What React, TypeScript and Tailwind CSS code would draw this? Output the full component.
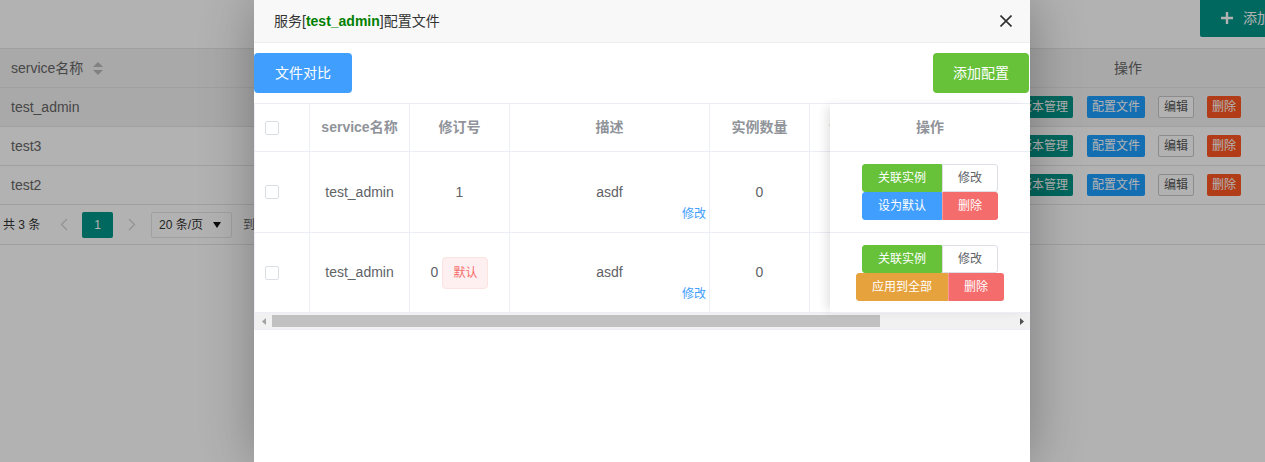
import React from "react";

const bgRows = [
  { name: "test_admin", hover: true },
  { name: "test3", hover: false },
  { name: "test2", hover: false },
];

const SortIcon = () => (
  <svg width="10" height="13" viewBox="0 0 10 13" className="ml-[10px]">
    <path d="M5 0 L10 5 L0 5 Z" fill="#b9b9b9" />
    <path d="M0 8 L10 8 L5 13 Z" fill="#b9b9b9" />
  </svg>
);

const XsBtn = ({ children, className }: { children: React.ReactNode; className: string }) => (
  <span className={`flex h-[22px] items-center rounded-[2px] px-[5px] text-[12px] ${className}`}>{children}</span>
);

const BackgroundPage = () => (
  <div className="w-full">
    <div className="flex h-[48px] justify-end">
      <button className="-mr-[52px] -mt-px flex h-[38px] items-center rounded-[2px] bg-[#009688] pl-[18px] pr-[18px] text-[14px] text-white">
        <svg width="18" height="18" viewBox="0 0 18 18">
          <path d="M9 3 V15 M3 9 H15" stroke="#fff" strokeWidth="2.4" />
        </svg>
        <span className="ml-[7px]">添加服务</span>
      </button>
    </div>
    <div className="border-t border-[#e6e6e6] text-[14px] text-[#666]">
      <div className="flex h-[39px] border-b border-[#e6e6e6] bg-[#f2f2f2]">
        <div className="flex flex-1 items-center pl-[11px]">
          service名称
          <SortIcon />
        </div>
        <div className="flex w-[274px] items-center justify-center">操作</div>
      </div>
      {bgRows.map((r) => (
        <div key={r.name} className={`flex h-[39px] border-b border-[#e6e6e6] ${r.hover ? "bg-[#f2f2f2]" : ""}`}>
          <div className="flex flex-1 items-center pl-[11px]">{r.name}</div>
          <div className="flex w-[274px] items-center justify-center">
            <XsBtn className="bg-[#009688] text-white">版本管理</XsBtn>
            <XsBtn className="ml-[14px] bg-[#1e9fff] text-white">配置文件</XsBtn>
            <XsBtn className="ml-[13px] border border-[#c9c9c9] bg-white text-[#555]">编辑</XsBtn>
            <XsBtn className="ml-[13px] bg-[#ff5722] text-white">删除</XsBtn>
          </div>
        </div>
      ))}
    </div>
    <div className="flex h-[40px] items-center border-b border-[#e6e6e6] text-[12px] text-[#333]">
      <span className="w-[57px] pl-[3px]">共 3 条</span>
      <svg width="8" height="13" viewBox="0 0 8 13" className="ml-[3px]">
        <path d="M7 1 L1.5 6.5 L7 12" fill="none" stroke="#d2d2d2" strokeWidth="1.3" />
      </svg>
      <span className="ml-[14px] flex h-[26px] w-[31px] items-center justify-center rounded-[2px] bg-[#009688] text-white">1</span>
      <svg width="8" height="13" viewBox="0 0 8 13" className="ml-[15px]">
        <path d="M1 1 L6.5 6.5 L1 12" fill="none" stroke="#d2d2d2" strokeWidth="1.3" />
      </svg>
      <span className="ml-[15px] flex h-[26px] w-[81px] items-center rounded-[2px] border border-[#e6e6e6] pl-[7px]">
        20 条/页
        <svg width="8" height="6" viewBox="0 0 8 6" className="ml-auto mr-[10px]">
          <path d="M0 0 H8 L4 6 Z" fill="#111" />
        </svg>
      </span>
      <span className="ml-[11px] text-[#666]">到第</span>
    </div>
  </div>
);

const cellBorder = "border-r border-[#ebeef5]";

const Checkbox = () => <span className="block h-[14px] w-[14px] rounded-[2px] border border-[#dcdfe6] bg-white" />;

const GBtn = ({ children, className }: { children: React.ReactNode; className: string }) => (
  <span className={`flex h-[28px] items-center border px-[15px] text-[12px] ${className}`}>{children}</span>
);

const green = "rounded-l-[3px] border-[#67c23a] bg-[#67c23a] text-white";
const white = "rounded-r-[3px] border-[#dcdfe6] bg-white text-[#606266]";
const red = "rounded-r-[3px] border-[#f56c6c] border-l-[#f89898] bg-[#f56c6c] text-white";

const rows = [
  { rev: "1", isDefault: false },
  { rev: "0", isDefault: true },
];

const ConfigTable = () => (
  <div className="relative border-l border-t border-[#ebeef5] text-[14px] text-[#606266]">
    <div className="overflow-hidden">
      <div className="w-[975px]">
        <div className="flex h-[48px] border-b border-[#ebeef5] font-bold text-[#909399]">
          <div className={`flex w-[55px] items-center pl-[10px] ${cellBorder}`}>
            <Checkbox />
          </div>
          <div className={`flex w-[100px] items-center justify-center ${cellBorder}`}>service名称</div>
          <div className={`flex w-[100px] items-center justify-center ${cellBorder}`}>修订号</div>
          <div className={`flex w-[200px] items-center justify-center ${cellBorder}`}>描述</div>
          <div className={`flex w-[100px] items-center justify-center ${cellBorder}`}>实例数量</div>
          <div className={`flex w-[220px] items-center pl-[19px] ${cellBorder}`}>创建时间</div>
          <div className="flex w-[200px] items-center justify-center">操作</div>
        </div>
        {rows.map((r, i) => (
          <div key={i} className={`flex border-b border-[#ebeef5] ${i === 0 ? "h-[81px]" : "h-[80px]"}`}>
            <div className={`flex w-[55px] items-center pl-[10px] ${cellBorder}`}>
              <Checkbox />
            </div>
            <div className={`flex w-[100px] items-center justify-center ${cellBorder}`}>test_admin</div>
            <div className={`flex w-[100px] items-center justify-center ${cellBorder}`}>
              {r.rev}
              {r.isDefault && (
                <span className="ml-[4px] flex h-[32px] items-center rounded-[4px] border border-[#fde2e2] bg-[#fef0f0] px-[10px] text-[12px] text-[#f56c6c]">
                  默认
                </span>
              )}
            </div>
            <div className={`relative flex w-[200px] items-center justify-center ${cellBorder}`}>
              asdf
              <span className="absolute bottom-[9px] right-[3px] text-[12px] text-[#409eff]">修改</span>
            </div>
            <div className={`flex w-[100px] items-center justify-center ${cellBorder}`}>0</div>
            <div className={`w-[220px] ${cellBorder}`} />
            <div className="w-[200px]" />
          </div>
        ))}
      </div>
    </div>

    <div className="absolute right-0 top-0 w-[200px] bg-white shadow-[-6px_0_10px_-3px_rgba(0,0,0,0.12)]">
      <div className="flex h-[48px] items-center justify-center border-b border-[#ebeef5] font-bold text-[#909399]">操作</div>
      <div className="flex h-[81px] flex-col items-center justify-center border-b border-[#ebeef5]">
        <div className="flex">
          <GBtn className={green}>关联实例</GBtn>
          <GBtn className={white}>修改</GBtn>
        </div>
        <div className="flex">
          <GBtn className="rounded-l-[3px] border-[#409eff] bg-[#409eff] text-white">设为默认</GBtn>
          <GBtn className={red}>删除</GBtn>
        </div>
      </div>
      <div className="flex h-[80px] flex-col items-center justify-center border-b border-[#ebeef5]">
        <div className="flex">
          <GBtn className={green}>关联实例</GBtn>
          <GBtn className={white}>修改</GBtn>
        </div>
        <div className="flex">
          <GBtn className="rounded-l-[3px] border-[#e6a23c] bg-[#e6a23c] text-white">应用到全部</GBtn>
          <GBtn className={red}>删除</GBtn>
        </div>
      </div>
    </div>

    <div className="flex h-[17px] items-center border-b border-[#ebeef5] bg-[#f1f1f1]">
      <div className="flex w-[17px] items-center justify-center">
        <svg width="4" height="7" viewBox="0 0 4 7">
          <path d="M4 0 V7 L0 3.5 Z" fill="#a3a3a3" />
        </svg>
      </div>
      <div className="h-[12px] w-[608px] bg-[#c1c1c1]" />
      <div className="ml-auto flex w-[17px] items-center justify-center">
        <svg width="4" height="7" viewBox="0 0 4 7">
          <path d="M0 0 V7 L4 3.5 Z" fill="#505050" />
        </svg>
      </div>
    </div>
  </div>
);

const Modal = () => (
  <div className="absolute left-[254px] top-0 flex h-[462px] w-[776px] flex-col bg-white shadow-[1px_1px_50px_rgba(0,0,0,0.3)]">
    <div className="flex h-[43px] shrink-0 items-center border-b border-[#eeeeee] bg-[#f8f8f8] pl-[20px] pr-[18px] text-[14px] text-[#333]">
      <span>
        服务[<b className="text-[#008000]">test_admin</b>]配置文件
      </span>
      <svg width="12" height="12" viewBox="0 0 12 12" className="ml-auto">
        <path d="M0.5 0.5 L11.5 11.5 M11.5 0.5 L0.5 11.5" stroke="#2f2f2f" strokeWidth="1.6" />
      </svg>
    </div>
    <div className="flex justify-between py-[10px] pr-[1px]">
      <button className="h-[40px] rounded-[4px] bg-[#409eff] px-[21px] text-[14px] text-white">文件对比</button>
      <button className="h-[40px] rounded-[4px] bg-[#67c23a] px-[20px] text-[14px] text-white">添加配置</button>
    </div>
    <ConfigTable />
  </div>
);

export default function App() {
  return (
    <div className="relative h-[462px] w-full overflow-hidden bg-white font-['Liberation_Sans','Noto_Sans_CJK_SC',sans-serif]">
      <BackgroundPage />
      <div className="absolute inset-0 bg-black/30" />
      <Modal />
    </div>
  );
}
